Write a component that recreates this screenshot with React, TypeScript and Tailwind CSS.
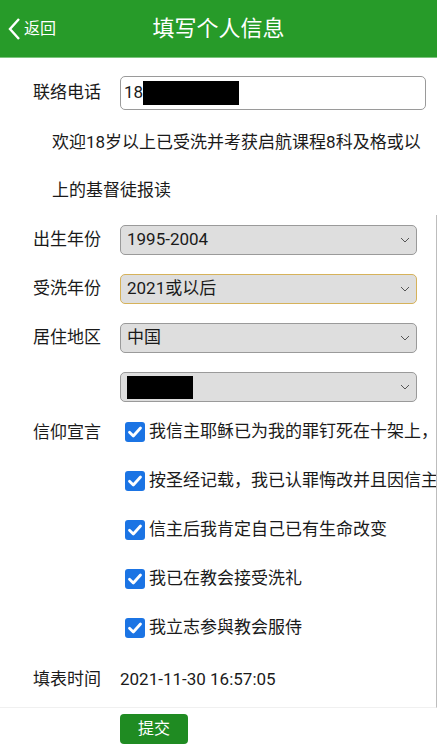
const font = "font-['Roboto','Noto_Sans_CJK_SC',sans-serif]";

function Chevron() {
  return (
    <svg width="10" height="6" viewBox="0 0 10 6" className="shrink-0">
      <path d="M1 1 L5 5 L9 1" fill="none" stroke="#555" strokeWidth="1" />
    </svg>
  );
}

function Select({ value, focus, redacted }: { value?: string; focus?: boolean; redacted?: boolean }) {
  return (
    <div
      className={`flex h-[30px] w-[297px] items-center justify-between rounded-[5px] border bg-[#dedede] pl-[6px] pr-[6px] text-[17px] text-[#1a1a1a] ${
        focus ? "border-[#d6b25a]" : "border-[#9a9a9a]"
      }`}
    >
      {redacted ? <div className="h-[23px] w-[66px] bg-black" /> : <span>{value}</span>}
      <Chevron />
    </div>
  );
}

function Check({ text }: { text: string }) {
  return (
    <div className="flex h-[49px] items-center">
      <div className="w-[125px] shrink-0" />
      <svg width="20" height="20" viewBox="0 0 20 20" className="shrink-0">
        <rect x="0" y="0" width="20" height="20" rx="3" fill="#1b74e4" />
        <path d="M4.5 10.2 L8.3 14 L15.5 6" fill="none" stroke="#fff" strokeWidth="2.8" strokeLinecap="round" strokeLinejoin="round" />
      </svg>
      <span className="ml-[4px] whitespace-nowrap text-[17px] text-[#1a1a1a]">{text}</span>
    </div>
  );
}

export default function App() {
  return (
    <div className={`${font} h-[744px] w-[437px] overflow-hidden bg-white`}>
      <header className="relative flex h-[57px] items-center justify-center bg-[#279b29] shadow-[0_1px_0_#7cc57d]">
        <div className="absolute left-[8px] top-0 flex h-full items-center">
          <svg width="13" height="24" viewBox="0 0 13 24">
            <path d="M11 2 L2 12 L11 22" fill="none" stroke="#fff" strokeWidth="2.4" />
          </svg>
          <span className="ml-[3px] text-[16px] text-white">返回</span>
        </div>
        <h1 className="text-[22px] text-white">填写个人信息</h1>
      </header>

      <div className="mt-[19px] flex h-[34px] items-center pl-[33px]">
        <span className="w-[87px] text-[17px] text-[#1a1a1a]">联络电话</span>
        <div className="flex h-[34px] w-[306px] items-center rounded-[5px] border border-[#9a9a9a] pl-[3px] text-[17px] text-[#1a1a1a]">
          <span>18</span>
          <div className="h-[24px] w-[96px] bg-black" />
        </div>
      </div>

      <p className="mt-[8px] pl-[52px] text-[17px] leading-[48px] text-[#1a1a1a]">
        欢迎18岁以上已受洗并考获启航课程8科及格或以
        <br />
        上的基督徒报读
      </p>

      <section className="mt-[1px] h-[493px] overflow-hidden border-r border-b border-r-[#bdbdbd] border-b-[#f0f0f0]">
        <div className="mt-[10px] flex flex-col gap-[19px] pl-[33px]">
          <div className="flex items-center">
            <span className="w-[87px] text-[17px] text-[#1a1a1a]">出生年份</span>
            <Select value="1995-2004" />
          </div>
          <div className="flex items-center">
            <span className="w-[87px] text-[17px] text-[#1a1a1a]">受洗年份</span>
            <Select value="2021或以后" focus />
          </div>
          <div className="flex items-center">
            <span className="w-[87px] text-[17px] text-[#1a1a1a]">居住地区</span>
            <Select value="中国" />
          </div>
          <div className="flex items-center">
            <span className="w-[87px]" />
            <Select redacted />
          </div>
        </div>

        <div className="relative mt-[5px]">
          <span className="absolute left-[33px] top-[13px] text-[17px] text-[#1a1a1a]">信仰宣言</span>
          <Check text="我信主耶稣已为我的罪钉死在十架上，并且从死里复活" />
          <Check text="按圣经记载，我已认罪悔改并且因信主耶稣称义" />
          <Check text="信主后我肯定自己已有生命改变" />
          <Check text="我已在教会接受洗礼" />
          <Check text="我立志参與教会服侍" />
        </div>

        <div className="flex h-[56px] items-center pl-[33px]">
          <span className="w-[87px] text-[17px] text-[#1a1a1a]">填表时间</span>
          <span className="text-[17px] text-[#1a1a1a]">2021-11-30 16:57:05</span>
        </div>
      </section>

      <div className="mt-[6px] pl-[120px]">
        <button className="h-[30px] w-[68px] rounded-[4px] bg-[#1f8b22] text-[16px] text-white">提交</button>
      </div>
    </div>
  );
}
